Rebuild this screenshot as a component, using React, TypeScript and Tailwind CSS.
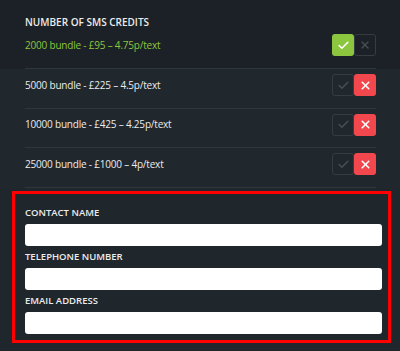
import { Check, X } from 'lucide-react';

const bundles = [
  { label: '2000 bundle - £95 – 4.75p/text', selected: true },
  { label: '5000 bundle - £225 – 4.5p/text', selected: false },
  { label: '10000 bundle - £425 – 4.25p/text', selected: false },
  { label: '25000 bundle - £1000 – 4p/text', selected: false },
];

function Toggle({ on }: { on: boolean }) {
  return (
    <div className="flex">
      {on ? (
        <>
          <div className="w-[22px] h-[22px] rounded-[3px] bg-[#8cc63f] flex items-center justify-center">
            <Check size={13} strokeWidth={3} className="text-white" />
          </div>
          <div className="w-[22px] h-[22px] rounded-[3px] border border-[#353c42] flex items-center justify-center">
            <X size={12} strokeWidth={2.5} className="text-[#4a5056]" />
          </div>
        </>
      ) : (
        <>
          <div className="w-[22px] h-[22px] rounded-[3px] border border-[#353c42] flex items-center justify-center">
            <Check size={13} strokeWidth={2.5} className="text-[#4a5056]" />
          </div>
          <div className="w-[22px] h-[22px] rounded-[3px] bg-[#f2474d] flex items-center justify-center">
            <X size={13} strokeWidth={3} className="text-white" />
          </div>
        </>
      )}
    </div>
  );
}

const fields = ['CONTACT NAME', 'TELEPHONE NUMBER', 'EMAIL ADDRESS'];

export default function App() {
  return (
    <div
      className="w-[400px] h-[351px] bg-[#1f262c] text-[#ececec] overflow-hidden"
      style={{ fontFamily: '"Open Sans", "Liberation Sans", sans-serif' }}
    >
      {/* bundles */}
      <div className="bg-[#1b2126] pt-[15px]">
        <div className="px-[25px] text-[10px] leading-[14px] font-semibold">NUMBER OF SMS CREDITS</div>
      </div>
      <div>
        {bundles.map((b, i) => (
          <div
            key={b.label}
            className={`${i === 0 ? 'bg-[#1b2126]' : 'bg-[#20272d]'} pl-[25px] pr-[24px]`}
          >
            <div
              className={`flex items-center justify-between pt-[5px] ${i === 0 ? 'pb-[12px]' : 'pb-[11.5px]'} border-b border-[#2f363c]`}
            >
              <span
                className={`text-[10px] tracking-[-0.2px] font-medium ${b.selected ? 'text-[#8cc63f]' : 'text-[#ececec]'}`}
              >
                {b.label}
              </span>
              <Toggle on={b.selected} />
            </div>
          </div>
        ))}
      </div>

      {/* contact details */}
      <div className="pl-[12px] pt-[3px]">
        <div className="w-[379px] border-[3px] border-[#ff0000] bg-[#1f262c] pl-[10px] pr-[6px] pt-[12px] pb-[6px] flex flex-col">
          {fields.map((f, i) => (
            <div key={f} className={`flex flex-col ${i > 0 ? 'mt-[4px]' : ''}`}>
              <label className="text-[9.5px] leading-[14px] font-semibold mb-[4px]">{f}</label>
              <input className="h-[22px] w-full rounded-[3px] bg-white outline-none" />
            </div>
          ))}
        </div>
      </div>
    </div>
  );
}
